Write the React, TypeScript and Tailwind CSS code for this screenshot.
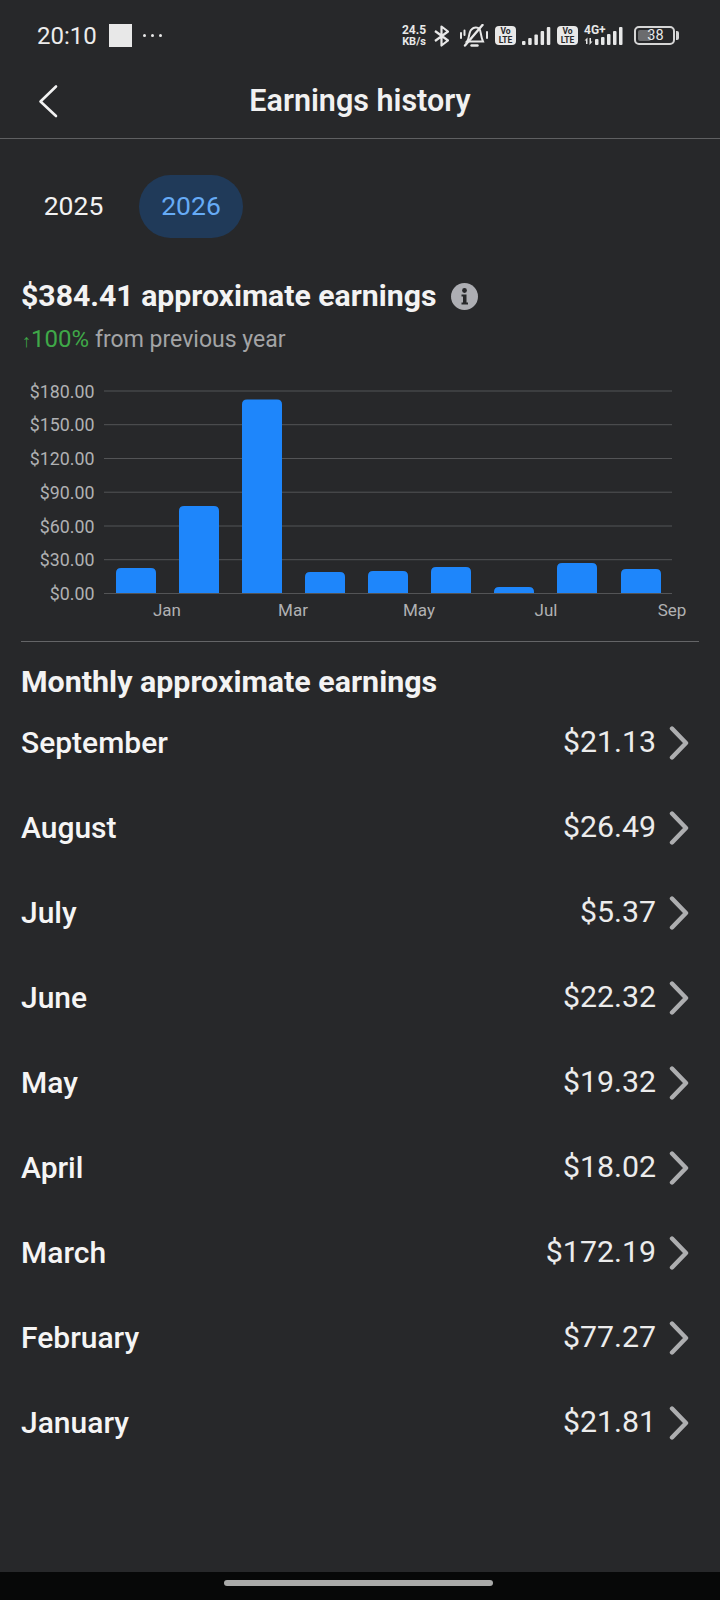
const BARS = [
  { x: 116, top: 568 },
  { x: 179, top: 506 },
  { x: 242, top: 399.5 },
  { x: 305, top: 572 },
  { x: 368, top: 571 },
  { x: 431, top: 567 },
  { x: 494, top: 587 },
  { x: 557, top: 563 },
  { x: 621, top: 569 },
];

const GRID = [
  { y: 391, label: "$180.00" },
  { y: 424.7, label: "$150.00" },
  { y: 458.5, label: "$120.00" },
  { y: 492.2, label: "$90.00" },
  { y: 526, label: "$60.00" },
  { y: 559.7, label: "$30.00" },
  { y: 593.5, label: "$0.00" },
];

const MONTHS = [
  { x: 167, label: "Jan" },
  { x: 293, label: "Mar" },
  { x: 419, label: "May" },
  { x: 546, label: "Jul" },
  { x: 672, label: "Sep" },
];

const ROWS = [
  { month: "September", amount: "$21.13" },
  { month: "August", amount: "$26.49" },
  { month: "July", amount: "$5.37" },
  { month: "June", amount: "$22.32" },
  { month: "May", amount: "$19.32" },
  { month: "April", amount: "$18.02" },
  { month: "March", amount: "$172.19" },
  { month: "February", amount: "$77.27" },
  { month: "January", amount: "$21.81" },
];

const SignalBars = () => (
  <svg width="29" height="18" viewBox="0 0 29 18" fill="#e8e8e8">
    <rect x="0" y="14" width="3.5" height="4" rx="1" />
    <rect x="6.2" y="11" width="3.5" height="7" rx="1" />
    <rect x="12.4" y="7.5" width="3.5" height="10.5" rx="1" />
    <rect x="18.6" y="4" width="3.5" height="14" rx="1" />
    <rect x="24.8" y="0" width="3.5" height="18" rx="1" />
  </svg>
);

const VoLte = () => (
  <div className="flex h-[19px] w-[21px] flex-col items-center justify-center rounded-[4px] bg-[#e8e8e8] text-[8.5px] leading-[9px] font-bold text-[#27282a]">
    <span>Vo</span>
    <span>LTE</span>
  </div>
);

const StatusBar = () => (
  <div className="relative flex h-[70px] items-center pt-[1px] pl-[37px]">
    <span className="text-[24px] leading-none text-[#ececec]">20:10</span>
    <div className="mb-[1px] ml-[12px] h-[23px] w-[23px] bg-[#e8e8e8]" />
    <div className="mb-[1px] ml-[11px] flex gap-[5px]">
      <div className="h-[3px] w-[3px] rounded-full bg-[#e8e8e8]" />
      <div className="h-[3px] w-[3px] rounded-full bg-[#e8e8e8]" />
      <div className="h-[3px] w-[3px] rounded-full bg-[#e8e8e8]" />
    </div>
    <div className="ml-auto flex items-center pr-[45px]">
      <div className="flex w-[26px] flex-col items-center font-bold text-[#e8e8e8]">
        <span className="text-[12px] leading-[12px]">24.5</span>
        <span className="text-[11px] leading-[11px]">KB/s</span>
      </div>
      <svg className="ml-[7px]" width="15" height="22" viewBox="0 0 15 22" fill="none" stroke="#e8e8e8" strokeWidth="2.2" strokeLinejoin="round">
        <path d="M1 6 L14 15.5 L7.5 20.5 V1.5 L14 6.5 L1 16" />
      </svg>
      <svg className="ml-[11px]" width="28" height="24" viewBox="0 0 28 24" fill="none" stroke="#e8e8e8" strokeWidth="2" strokeLinecap="round">
        <path d="M7 17.5 C9.5 15 8.5 8 11.5 5.5 C14 3 17.5 3 19.5 5 C21 7 20.5 12 23 17.5 H7 Z" />
        <path d="M11.5 21.5 H17.5" strokeWidth="2.4" />
        <path d="M5 21.5 L22.5 1" strokeWidth="2.4" />
        <path d="M1 9 V14 M4.5 6.5 V11 M27 8 V14" />
      </svg>
      <div className="ml-[7px]">
        <VoLte />
      </div>
      <div className="ml-[6px]">
        <SignalBars />
      </div>
      <div className="ml-[6px]">
        <VoLte />
      </div>
      <div className="relative ml-[6px] h-[18px] w-[42px]">
        <span className="absolute -top-[3px] left-0 text-[12px] leading-[12px] font-bold text-[#e8e8e8]">4G+</span>
        <svg className="absolute bottom-0 left-0" width="42" height="18" viewBox="0 0 42 18" fill="#e8e8e8">
          <path d="M3.5 10.5 V17 H2 V13.5 L0.5 13.5 Z M5.5 11 H7 V14.5 H8.5 L5.5 18 Z" />
          <rect x="11" y="12" width="3.5" height="6" rx="1" />
          <rect x="17" y="10" width="3.5" height="8" rx="1" />
          <rect x="23" y="7" width="3.5" height="11" rx="1" />
          <rect x="29" y="4" width="3.5" height="14" rx="1" />
          <rect x="35" y="0" width="3.5" height="18" rx="1" />
        </svg>
      </div>
      <div className="relative ml-[8px] flex h-[19px] w-[41px] items-center rounded-[5px] border-2 border-[#d6d6d6] p-[2px]">
        <div className="h-full w-[13px] rounded-[2px] bg-[#6b6c6e]" />
        <span className="absolute inset-0 flex items-center justify-center pt-[1px] pl-[2px] text-[14.5px] leading-none text-[#e8e8e8]">38</span>
        <div className="absolute top-[3px] -right-[6px] h-[9px] w-[3px] rounded-r-[2px] bg-[#d6d6d6]" />
      </div>
    </div>
  </div>
);

const EarningsChart = () => (
  <svg className="block" width="720" height="250" viewBox="0 380 720 250">
    {GRID.map((g) => (
      <g key={g.label}>
        <line x1="104" x2="672" y1={g.y} y2={g.y} stroke="#535456" strokeWidth="1" />
        <text x="94.5" y={g.y + 6.5} textAnchor="end" fontSize="17.8" fill="#b0b1b3">
          {g.label}
        </text>
      </g>
    ))}
    {BARS.map((b) => (
      <path
        key={b.x}
        d={`M${b.x} 593 V${b.top + 5} Q${b.x} ${b.top} ${b.x + 5} ${b.top} H${b.x + 35} Q${b.x + 40} ${b.top} ${b.x + 40} ${b.top + 5} V593 Z`}
        fill="#1e86fb"
      />
    ))}
    {MONTHS.map((m) => (
      <text key={m.label} x={m.x} y="616" textAnchor="middle" fontSize="17" fill="#b0b1b3">
        {m.label}
      </text>
    ))}
  </svg>
);

const App = () => {
  return (
    <div className="flex h-[1600px] w-[720px] flex-col overflow-hidden bg-[#27282a] font-['Roboto',sans-serif] text-white">
      <StatusBar />

      <div className="relative flex h-[69px] items-center justify-center border-b border-[#5f6062] pb-[6px]">
        <svg className="absolute top-[14px] left-[38px]" width="22" height="36" viewBox="0 0 22 36" fill="none" stroke="#f2f2f2" strokeWidth="2.6" strokeLinecap="round" strokeLinejoin="round">
          <path d="M18 2.5 L2.5 17.5 L18 32" />
        </svg>
        <span className="text-[30.5px] leading-none font-semibold text-[#f1f1f1]">Earnings history</span>
      </div>

      <div className="mt-[36px] flex h-[63px] items-center pl-[22px]">
        <div className="flex h-full w-[103px] items-center justify-center pb-[2px] text-[26.5px] text-[#f2f2f2]">2025</div>
        <div className="ml-[14px] flex h-full w-[104px] items-center justify-center rounded-full bg-[#203a59] pb-[2px] text-[26.5px] font-[450] text-[#66abf6]">
          2026
        </div>
      </div>

      <div className="mt-[38px] flex h-[40px] items-center pl-[21px]">
        <span className="text-[30.2px] leading-none font-bold text-[#f3f3f3]">$384.41 approximate earnings</span>
        <svg className="ml-[15px]" width="27" height="27" viewBox="0 0 27 27">
          <circle cx="13.5" cy="13.5" r="13.5" fill="#adaeb3" />
          <circle cx="13.5" cy="7.5" r="2.4" fill="#27282a" />
          <path d="M10.5 11.5 H15.5 V19.5 H17 V21.5 H10.5 V19.5 H12 V13.5 H10.5 Z" fill="#27282a" />
        </svg>
      </div>

      <div className="mt-[8px] flex h-[30px] items-center pl-[22px] leading-none">
        <span className="text-[24px] text-[#3fa848]">
          <span className="text-[18px]">↑</span>100%
        </span>
        <span className="ml-[6px] text-[23px] text-[#a3a4a6]">from previous year</span>
      </div>

      <div className="mt-[26px]">
        <EarningsChart />
      </div>

      <div className="mt-[11px] ml-[21px] h-[1px] w-[678px] bg-[#646567]" />

      <div className="mt-[23px] flex h-[35px] items-center pl-[21px]">
        <span className="text-[30.4px] leading-none font-bold text-[#f3f3f3]">Monthly approximate earnings</span>
      </div>

      <div className="flex flex-1 flex-col">
        {ROWS.map((row) => (
          <div key={row.month} className="flex h-[85px] shrink-0 items-center pr-[31px] pl-[21px]">
            <span className="text-[30px] leading-none font-medium text-[#f5f5f5]">{row.month}</span>
            <span className="ml-auto text-[30.3px] leading-none text-[#ececec]">{row.amount}</span>
            <svg className="ml-[13px]" width="20" height="34" viewBox="0 0 20 34" fill="none" stroke="#adaeb0" strokeWidth="4.4" strokeLinecap="round" strokeLinejoin="round">
              <path d="M3 2.5 L17 17 L3 31.5" />
            </svg>
          </div>
        ))}
      </div>

      <div className="flex h-[28px] shrink-0 items-center justify-center bg-[#070808] pb-[6px]">
        <div className="ml-[-3px] h-[6px] w-[269px] rounded-full bg-[#a9aaa9]" />
      </div>
    </div>
  );
};

export default App;
